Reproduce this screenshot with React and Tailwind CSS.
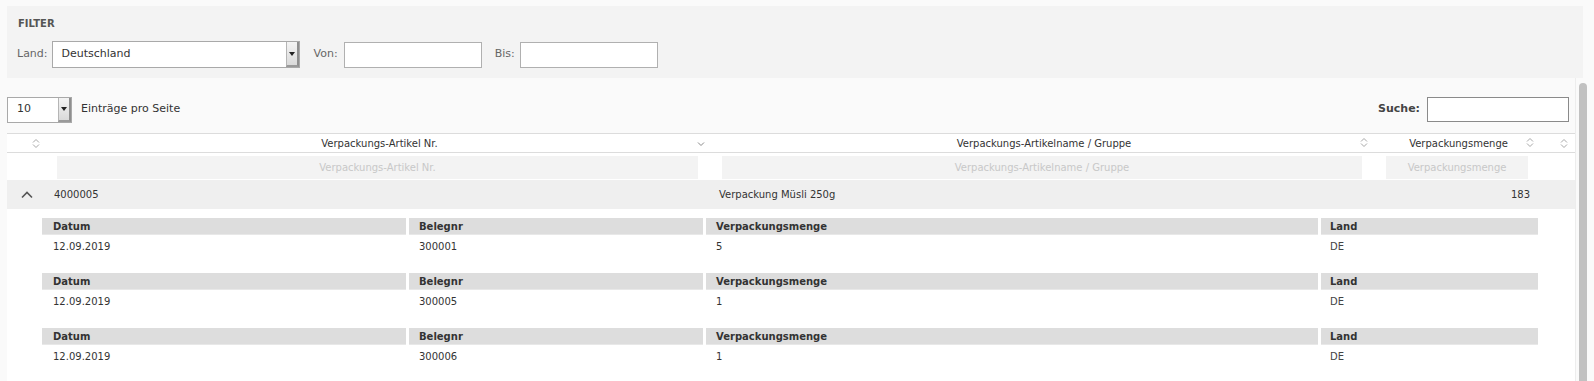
import React from 'react'

const rows = [
  { datum: '12.09.2019', beleg: '300001', menge: '5', land: 'DE' },
  { datum: '12.09.2019', beleg: '300005', menge: '1', land: 'DE' },
  { datum: '12.09.2019', beleg: '300006', menge: '1', land: 'DE' },
]

function SortBoth() {
  return (
    <svg width="8" height="11" viewBox="0 0 8 11" fill="none" stroke="#a8a8a8" strokeWidth="1">
      <path d="M1 4.5 L4 1.5 L7 4.5" />
      <path d="M1 6.5 L4 9.5 L7 6.5" />
    </svg>
  )
}

function SortDown() {
  return (
    <svg width="8" height="6" viewBox="0 0 8 6" fill="none" stroke="#8a8a8a" strokeWidth="1">
      <path d="M1 1.5 L4 4.5 L7 1.5" />
    </svg>
  )
}

function SelectBox({ value, className }) {
  return (
    <div className={`flex items-stretch bg-white border border-[#a9a9a9] ${className}`}>
      <div className="flex-1 flex items-center pl-[9px] text-[11px] text-[#333]">{value}</div>
      <div className="w-[13px] flex items-center justify-center border-l border-[#b5b5b5] border-r-2 border-r-[#8f8f8f] border-b-2 border-b-[#9a9a9a] bg-gradient-to-b from-[#f4f4f4] to-[#dadada]">
        <div className="w-0 h-0 border-l-[3px] border-r-[3px] border-t-[4px] border-l-transparent border-r-transparent border-t-[#222]" />
      </div>
    </div>
  )
}

function App() {
  return (
    <div className="h-[381px] overflow-hidden bg-[#fafafa] font-['DejaVu_Sans',sans-serif] text-[#333]">
      {/* Filter */}
      <div className="pt-[6px] pl-[7px] pr-[11px]">
        <div className="h-[72px] bg-[#f3f3f3] pt-[12px] pl-[10px]">
          <div className="text-[10px] leading-[12px] font-bold text-[#555] pl-[1px]">FILTER</div>
          <div className="flex items-center h-[27px] mt-[11px] text-[11px] text-[#666]">
            <span>Land:</span>
            <SelectBox value="Deutschland" className="ml-[4px] w-[248px] h-[27px]" />
            <span className="ml-[14px]">Von:</span>
            <input className="ml-[6px] w-[138px] h-[26px] bg-white border border-[#b0b0b0] outline-none" />
            <span className="ml-[13px]">Bis:</span>
            <input className="ml-[5px] w-[138px] h-[26px] bg-white border border-[#b0b0b0] outline-none" />
          </div>
        </div>
      </div>

      <div className="flex pl-[7px]">
        <div className="w-[1568px]">
          {/* Length + search */}
          <div className="flex items-center justify-between h-[55px] pt-[8px]">
            <div className="flex items-center">
              <SelectBox value="10" className="w-[65px] h-[26px]" />
              <span className="ml-[9px] text-[11px]">Einträge pro Seite</span>
            </div>
            <div className="flex items-center pr-[6px]">
              <span className="text-[11px] font-bold text-[#444]">Suche:</span>
              <input className="ml-[7px] w-[142px] h-[25px] bg-white border border-[#8a8a8a] outline-none" />
            </div>
          </div>

          {/* Table */}
          <div className="bg-white">
            <div className="grid grid-cols-[40px_665px_664px_167px_32px] h-[20px] border-y border-[#dcdcdc] text-[10px] items-center">
              <div className="flex justify-end pr-[7px]"><SortBoth /></div>
              <div className="relative text-center">
                Verpackungs-Artikel Nr.
                <span className="absolute right-[7px] top-[5px]"><SortDown /></span>
              </div>
              <div className="relative text-center">
                Verpackungs-Artikelname / Gruppe
                <span className="absolute right-[8px] top-[1px]"><SortBoth /></span>
              </div>
              <div className="relative text-center pr-[2px]">
                Verpackungsmenge
                <span className="absolute right-[9px] top-[1px]"><SortBoth /></span>
              </div>
              <div className="flex justify-end pr-[7px]"><SortBoth /></div>
            </div>

            <div className="grid grid-cols-[40px_665px_664px_167px_32px] h-[27px] pt-[3px] text-[10px]">
              <div />
              <div className="pl-[10px] pr-[14px]">
                <div className="h-[23px] bg-[#f3f3f3] text-[#c8c8c8] flex items-center justify-center">Verpackungs-Artikel Nr.</div>
              </div>
              <div className="pl-[10px] pr-[14px]">
                <div className="h-[23px] bg-[#f3f3f3] text-[#c8c8c8] flex items-center justify-center">Verpackungs-Artikelname / Gruppe</div>
              </div>
              <div className="pl-[10px] pr-[15px]">
                <div className="h-[23px] bg-[#f3f3f3] text-[#c8c8c8] flex items-center justify-center">Verpackungsmenge</div>
              </div>
              <div />
            </div>

            <div className="grid grid-cols-[40px_665px_664px_167px_32px] h-[29px] bg-[#efefef] items-center text-[10px]">
              <div className="pl-[14px]">
                <svg width="12" height="8" viewBox="0 0 12 8" fill="none" stroke="#555" strokeWidth="1.6">
                  <path d="M1 6.5 L6 1.5 L11 6.5" />
                </svg>
              </div>
              <div className="pl-[7px]">4000005</div>
              <div className="pl-[7px]">Verpackung Müsli 250g</div>
              <div className="text-right pr-[13px]">183</div>
              <div />
            </div>

            {/* Detail */}
            <div className="pl-[35px] pt-[9px] pb-[10px]">
              {rows.map((r, i) => (
                <div key={i} className="mb-[16px] text-[10px]">
                  <div className="grid grid-cols-[364px_294px_612px_217px] gap-x-[3px] font-bold text-[#333]">
                    <div className="h-[17px] bg-[#dddddd] border-b border-[#e8e8e8] pl-[11px] flex items-center">Datum</div>
                    <div className="h-[17px] bg-[#dddddd] border-b border-[#e8e8e8] pl-[10px] flex items-center">Belegnr</div>
                    <div className="h-[17px] bg-[#dddddd] border-b border-[#e8e8e8] pl-[10px] flex items-center">Verpackungsmenge</div>
                    <div className="h-[17px] bg-[#dddddd] border-b border-[#e8e8e8] pl-[9px] flex items-center">Land</div>
                  </div>
                  <div className="grid grid-cols-[364px_294px_612px_217px] gap-x-[3px] h-[22px] items-center">
                    <div className="pl-[11px]">{r.datum}</div>
                    <div className="pl-[10px]">{r.beleg}</div>
                    <div className="pl-[10px]">{r.menge}</div>
                    <div className="pl-[9px] text-[#444]">{r.land}</div>
                  </div>
                </div>
              ))}
            </div>
          </div>
        </div>

        {/* Scrollbar */}
        <div className="w-[15px] h-[310px] pl-[3px] pt-[5px] border-l border-[#ededed]">
          <div className="w-[8px] h-full rounded-full bg-[#c1c1c1]" />
        </div>
      </div>
    </div>
  )
}

export default App
